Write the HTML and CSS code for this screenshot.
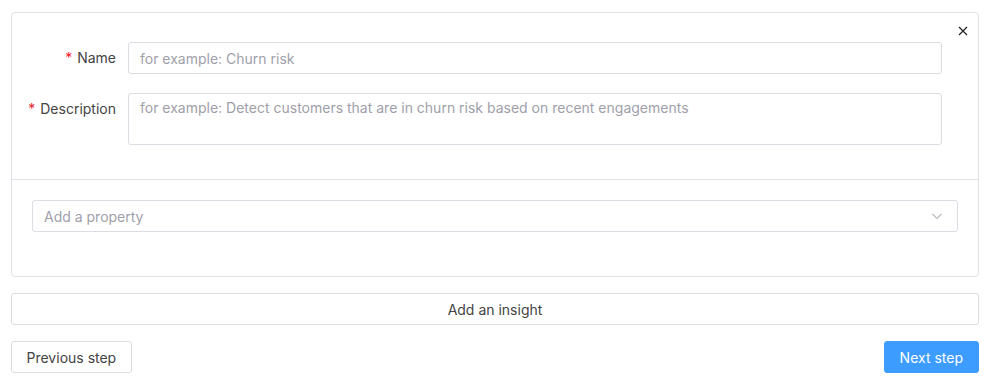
FILE: index.html
```html
<!DOCTYPE html>
<html lang="en">
<head>
    <meta charset="UTF-8">
    <title>Insight Form</title>
    <link rel="stylesheet" href="styles.css">
</head>
<body>
    <div class="page">
        <div class="card">
            <button type="button" class="close-btn" aria-label="Close">
                <svg width="10" height="10" viewBox="0 0 10 10"><path d="M1 1L9 9M9 1L1 9" stroke="#222" stroke-width="1.2" fill="none"/></svg>
            </button>
            <div class="card-top">
                <div class="form-row">
                    <label for="name"><span class="req">*</span> Name</label>
                    <input type="text" id="name" placeholder="for example: Churn risk">
                </div>
                <div class="form-row">
                    <label for="description"><span class="req">*</span> Description</label>
                    <textarea id="description" placeholder="for example: Detect customers that are in churn risk based on recent engagements"></textarea>
                </div>
            </div>
            <div class="card-bottom">
                <div class="select">
                    <span>Add a property</span>
                    <svg width="12" height="12" viewBox="0 0 12 12"><path d="M1.5 4L6 8.5L10.5 4" stroke="#b8b8c0" stroke-width="1.1" fill="none"/></svg>
                </div>
            </div>
        </div>
        <button type="button" class="insight-btn">Add an insight</button>
        <div class="steps">
            <button type="button" class="btn">Previous step</button>
            <button type="button" class="btn primary">Next step</button>
        </div>
    </div>
</body>
</html>
```

FILE: styles.css
```css
body {
    margin: 0;
    font-family: Inter, "Noto Sans", sans-serif;
    font-size: 14px;
    color: #444;
    background: #fff;
}
.page {
    width: 968px;
    padding: 12px 11px;
}
.card {
    position: relative;
    border: 1px solid #e0e0e6;
    border-radius: 4px;
}
.close-btn {
    position: absolute;
    top: 8px;
    right: 5px;
    width: 20px;
    height: 20px;
    padding: 0;
    border: none;
    background: none;
    display: flex;
    align-items: center;
    justify-content: center;
    cursor: pointer;
}
.card-top {
    padding: 29px 36px 34px 0;
    border-bottom: 1px solid #e0e0e6;
}
.form-row {
    display: flex;
    align-items: flex-start;
    gap: 12px;
    margin-bottom: 19px;
}
.form-row:last-child {
    margin-bottom: 0;
}
.form-row label {
    width: 104px;
    text-align: right;
    line-height: 31px;
    color: #444;
}
.req {
    color: #f5222d;
    margin-right: 1px;
}
.form-row input,
.form-row textarea {
    flex: 1;
    box-sizing: border-box;
    border: 1px solid #dcdce2;
    border-radius: 3px;
    padding: 0 11px;
    font-family: inherit;
    font-size: 14px;
    color: #444;
}
.form-row input {
    height: 32px;
}
.form-row textarea {
    height: 52px;
    padding-top: 5px;
    line-height: 18px;
    resize: none;
}
::placeholder {
    color: #a0a0aa;
}
.card-bottom {
    padding: 20px 20px 44px 20px;
}
.select {
    box-sizing: border-box;
    height: 32px;
    border: 1px solid #dcdce2;
    border-radius: 3px;
    display: flex;
    align-items: center;
    justify-content: space-between;
    padding: 0 14px 0 11px;
    color: #a0a0aa;
}
.insight-btn {
    display: block;
    width: 100%;
    height: 32px;
    margin-top: 16px;
    border: 1px solid #dcdce2;
    border-radius: 3px;
    background: #fff;
    font-family: inherit;
    font-size: 14px;
    color: #444;
}
.steps {
    display: flex;
    justify-content: space-between;
    margin-top: 16px;
}
.btn {
    height: 32px;
    padding: 0 14.5px;
    border: 1px solid #dcdce2;
    border-radius: 3px;
    background: #fff;
    font-family: inherit;
    font-size: 14px;
    color: #444;
}
.btn.primary {
    padding: 0 15px;
    background: #3d9cff;
    border-color: #3d9cff;
    color: #fff;
}
```
